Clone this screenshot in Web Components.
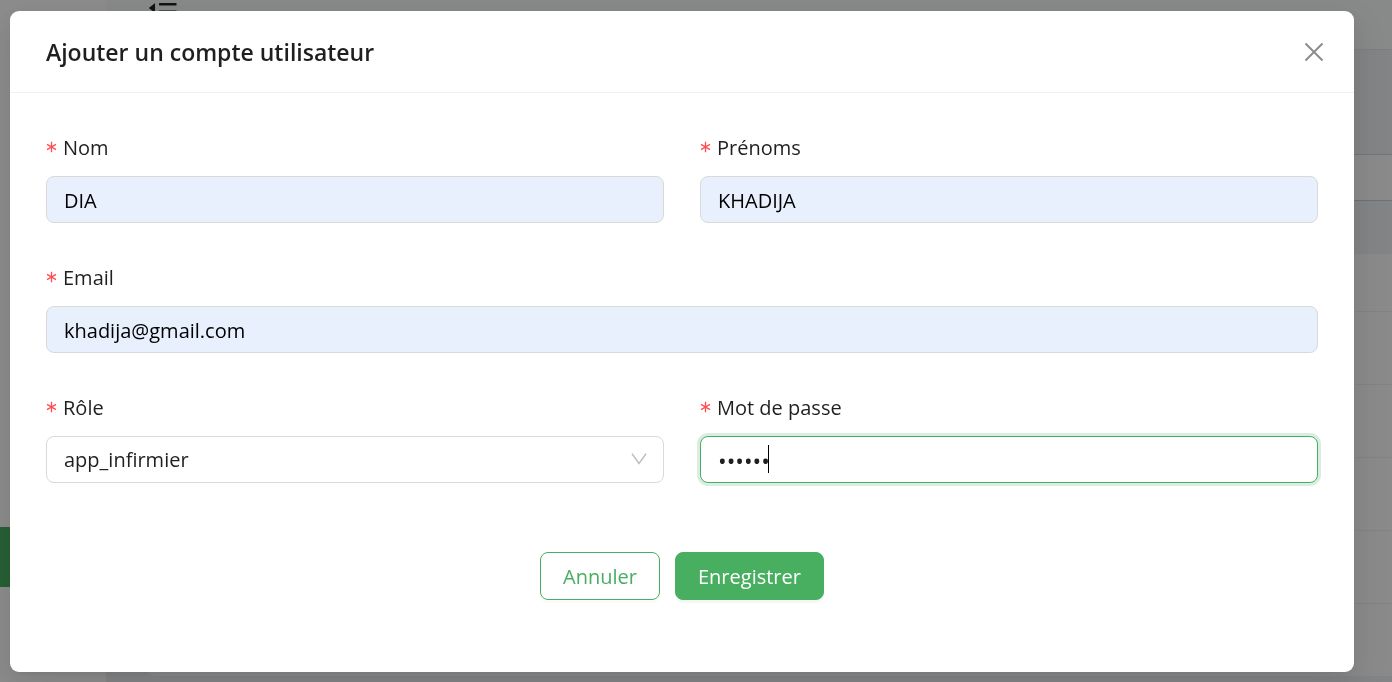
<!DOCTYPE html>
<html lang="fr">
<head>
<meta charset="utf-8">
<meta name="viewport" content="width=device-width, initial-scale=1">
<title>Ajouter un compte utilisateur</title>
<style>
  html, body { height: 100%; margin: 0; }
  body {
    overflow: hidden;
    font-family: "Open Sans", "Noto Sans", sans-serif;
    font-size: 20px;
    line-height: 32px;
    color: rgba(0, 0, 0, .88);
    --primary: #48ae60;
    --border: #d9d9d9;
  }
  .row { display: grid; grid-template-columns: 1fr 1fr; gap: 36px; }
  form { display: flex; flex-direction: column; gap: 37px; }
  .actions { display: flex; justify-content: center; gap: 15px; padding-top: 32px; }
</style>
</head>
<body>
<app-shell></app-shell>
<modal-dialog heading="Ajouter un compte utilisateur">
  <form onsubmit="return false">
    <div class="row">
      <text-field label="Nom" value="DIA" filled></text-field>
      <text-field label="Prénoms" value="KHADIJA" filled></text-field>
    </div>
    <text-field label="Email" type="email" value="khadija@gmail.com" filled></text-field>
    <div class="row">
      <select-field label="Rôle" value="app_infirmier"></select-field>
      <text-field label="Mot de passe" type="password" value="••••••" active></text-field>
    </div>
    <div class="actions">
      <app-button>Annuler</app-button>
      <app-button variant="primary">Enregistrer</app-button>
    </div>
  </form>
</modal-dialog>

<script>
const labelStyles = `
  :host { display: block; min-width: 0; }
  label { display: flex; align-items: center; gap: 6px; height: 34px; margin-bottom: 12px; }
  label svg { width: 11px; height: 12px; flex: none; }
  label span { padding-top: 2px; }
  .control { position: relative; display: flex; }
  input, select {
    box-sizing: border-box; width: 100%; height: 47px; margin: 0; padding: 0 17px;
    border: 1px solid var(--border); border-radius: 8px; background: #fff;
    font: inherit; color: inherit; outline: none; appearance: none;
  }
  input { padding-top: 2px; }`;
const star = `<svg viewBox="0 0 11 12" aria-hidden="true"><path d="M5.500 .8v10.400M1 3.400l9 5.200M10 3.400L1 8.600" stroke="#ff4d4f" stroke-width="1.300" fill="none"/></svg>`;

class AppShell extends HTMLElement {
  constructor() {
    super();
    this.attachShadow({ mode: 'open' }).innerHTML = `
      <style>
        :host { display: grid; grid-template-columns: 106px 1fr; height: 100vh; overflow: hidden; background: #fff; }
        aside { background: #fff; display: flex; flex-direction: column; justify-content: flex-end; padding-bottom: 95px; }
        .current { height: 60px; background: #48ae60; }
        .main { display: flex; flex-direction: column; min-width: 0; background: #edf0f4; }
        header { box-sizing: border-box; height: 50px; padding-left: 39px; background: #f7fcf9; border-bottom: 1px solid #e4e6e9; overflow: hidden; }
        header svg { display: block; width: 36px; height: 36px; margin-top: -10px; }
        .card { margin: 104px 0 6px 38px; flex: 1; display: flex; flex-direction: column; background: #fcfcfc; border-radius: 12px 0 0 12px; border-top: 1px solid #d4d4d4; overflow: hidden; }
        .bar { height: 45px; flex: none; border-bottom: 1px solid #cfcfcf; }
        .head { height: 53px; flex: none; background: #edf0f4; }
        .line { height: 72px; flex: none; border-bottom: 1px solid #eeeeee; }
        .line.first { height: 57px; }
      </style>
      <aside><div class="current"></div></aside>
      <div class="main">
        <header><svg viewBox="0 0 1024 1024" aria-hidden="true"><path d="M408 442h480c4.400 0 8-3.600 8-8v-56c0-4.400-3.600-8-8-8H408c-4.400 0-8 3.600-8 8v56c0 4.400 3.600 8 8 8zm-8 204c0 4.400 3.600 8 8 8h480c4.400 0 8-3.600 8-8v-56c0-4.400-3.600-8-8-8H408c-4.400 0-8 3.600-8 8v56zM904 160H120c-4.400 0-8 3.600-8 8v56c0 4.400 3.600 8 8 8h784c4.400 0 8-3.600 8-8v-56c0-4.400-3.600-8-8-8zm0 624H120c-4.400 0-8 3.600-8 8v56c0 4.400 3.600 8 8 8h784c4.400 0 8-3.600 8-8v-56c0-4.400-3.600-8-8-8zM115.400 518.900L271.700 642c5.800 4.600 14.400.5 14.400-6.900V388.900c0-7.400-8.500-11.500-14.400-6.900L115.400 505.100a8.740 8.740 0 000 13.800z" fill="#222"/></svg></header>
        <div class="card">
          <div class="bar"></div><div class="head"></div>
          <div class="line first"></div><div class="line"></div><div class="line"></div><div class="line"></div><div class="line"></div>
        </div>
      </div>`;
  }
}
customElements.define('app-shell', AppShell);

class ModalDialog extends HTMLElement {
  constructor() {
    super();
    this.attachShadow({ mode: 'open' }).innerHTML = `
      <style>
        :host { position: fixed; inset: 0; overflow: hidden; padding: 11px 38px 0 10px; background: rgba(0, 0, 0, .45); }
        section { background: #fff; border-radius: 9px; box-shadow: 0 9px 24px rgba(0,0,0,.08), 0 4px 9px -6px rgba(0,0,0,.12), 0 13px 42px 12px rgba(0,0,0,.05); }
        header { display: flex; align-items: center; justify-content: space-between; height: 81px; padding: 0 30px 0 36px; border-bottom: 1px solid #f0f0f0; }
        h2 { margin: 0; font-size: 23px; line-height: 36px; font-weight: 600; }
        button { display: flex; padding: 0; border: 0; background: none; cursor: pointer; }
        button svg { width: 20px; height: 20px; }
        .body { padding: 37px 36px 72px; }
      </style>
      <section role="dialog" aria-modal="true" aria-labelledby="title">
        <header><h2 id="title"></h2>
          <button type="button" aria-label="Fermer"><svg viewBox="0 0 20 20"><path d="M1.500 1.500l17 17M18.500 1.500l-17 17" stroke="#8c8c8c" stroke-width="2"/></svg></button>
        </header>
        <div class="body"><slot></slot></div>
      </section>`;
  }
  connectedCallback() { this.shadowRoot.querySelector('h2').textContent = this.getAttribute('heading'); }
}
customElements.define('modal-dialog', ModalDialog);

class TextField extends HTMLElement {
  constructor() {
    super();
    this.attachShadow({ mode: 'open' }).innerHTML = `
      <style>${labelStyles}
        :host([filled]) input { background: #e8f0fe; color: #000; }
        :host([active]) input { border-color: var(--primary); box-shadow: 0 0 0 3px #d9eedf; caret-color: transparent; }
        input[type="password"] { font-size: 23px; }
        .caret { display: none; position: absolute; left: 68px; top: 9px; width: 1px; height: 28px; background: #000; }
        :host([active]) .caret { display: block; }
      </style>
      <label for="control">${star}<span></span></label>
      <div class="control"><input id="control" required><i class="caret"></i></div>`;
  }
  connectedCallback() {
    const input = this.shadowRoot.querySelector('input');
    this.shadowRoot.querySelector('label span').textContent = this.getAttribute('label');
    input.type = this.getAttribute('type') || 'text';
    input.value = this.getAttribute('value') || '';
  }
}
customElements.define('text-field', TextField);

class SelectField extends HTMLElement {
  constructor() {
    super();
    this.attachShadow({ mode: 'open' }).innerHTML = `
      <style>${labelStyles}
        .arrow { position: absolute; right: 17px; top: 17px; width: 16px; height: 12px; pointer-events: none; }
      </style>
      <label for="control">${star}<span></span></label>
      <div class="control"><select id="control" required><option></option></select>
        <svg class="arrow" viewBox="0 0 16 12" aria-hidden="true"><path d="M1 .8l7 9.700 7-9.700" fill="none" stroke="#bfbfbf" stroke-width="1.500"/></svg></div>`;
  }
  connectedCallback() {
    this.shadowRoot.querySelector('label span').textContent = this.getAttribute('label');
    this.shadowRoot.querySelector('option').textContent = this.getAttribute('value');
  }
}
customElements.define('select-field', SelectField);

class AppButton extends HTMLElement {
  constructor() {
    super();
    this.attachShadow({ mode: 'open' }).innerHTML = `
      <style>
        :host { display: block; }
        button { height: 48px; padding: 2px 22px 0; border: 1px solid var(--primary); border-radius: 8px; background: #fff; color: var(--primary); font: inherit; cursor: pointer; box-shadow: 0 3px 0 rgba(0,0,0,.02); }
        :host([variant="primary"]) button { background: var(--primary); color: #fff; box-shadow: 0 3px 0 rgba(5,60,20,.04); }
      </style>
      <button type="button"><slot></slot></button>`;
  }
}
customElements.define('app-button', AppButton);
</script>
</body>
</html>
